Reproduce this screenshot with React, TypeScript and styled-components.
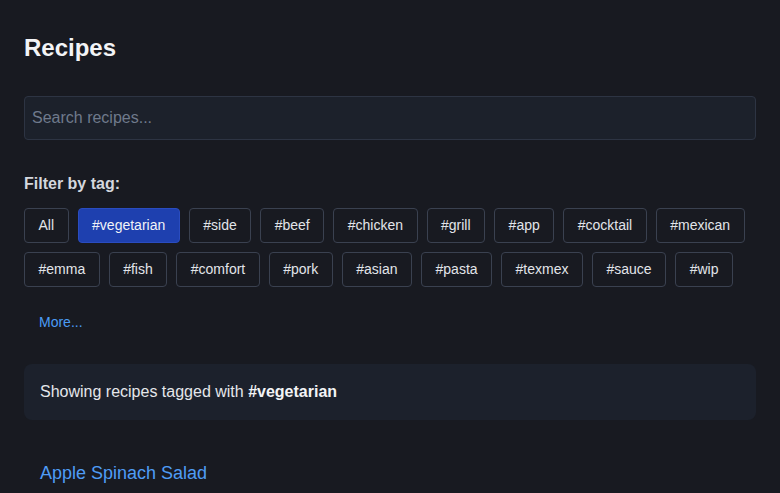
import React, { useState } from "react";
import styled, { createGlobalStyle } from "styled-components";

const GlobalStyle = createGlobalStyle`
  html, body {
    margin: 0;
    padding: 0;
    background: #181a21;
  }
  body {
    font-family: "Liberation Sans", Arial, sans-serif;
    color: #e5e7eb;
  }
  * { box-sizing: border-box; }
`;

const Page = styled.main`
  min-height: 493px;
  padding: 34px 24px 24px 24px;
  background: #181a21;
`;

const Title = styled.h1`
  margin: 0 0 34px 0;
  font-size: 24px;
  line-height: 1.15;
  font-weight: 700;
  color: #f3f4f6;
`;

const Search = styled.input`
  display: block;
  width: 100%;
  height: 44px;
  padding: 0 7px;
  background: #1c212b;
  border: 1px solid #2d3443;
  border-radius: 4px;
  color: #e5e7eb;
  font-family: "Liberation Sans", Arial, sans-serif;
  font-size: 16px;
  outline: none;
  &::placeholder {
    color: #6f7a8c;
  }
`;

const FilterLabel = styled.div`
  margin: 35px 0 15px 0;
  font-size: 16px;
  line-height: 1.15;
  font-weight: 700;
  color: #d4d7de;
`;

const TagList = styled.div`
  display: flex;
  flex-wrap: wrap;
  column-gap: 9px;
  row-gap: 9px;
`;

const TagButton = styled.button<{ $active?: boolean }>`
  height: 35px;
  padding: 1px 13.5px 0 13.5px;
  border: 1px solid ${(p) => (p.$active ? "#2a4cc0" : "#3a4150")};
  border-radius: 4px;
  background: ${(p) => (p.$active ? "#1e40af" : "transparent")};
  color: ${(p) => (p.$active ? "#f1f3f7" : "#e2e5ea")};
  font-family: "Liberation Sans", Arial, sans-serif;
  font-size: 14px;
  line-height: 17px;
  cursor: pointer;
`;

const MoreButton = styled.button`
  display: block;
  margin-top: 18px;
  height: 35px;
  padding: 0 14px;
  border: 1px solid transparent;
  background: transparent;
  color: #4b9cf5;
  font-family: "Liberation Sans", Arial, sans-serif;
  font-size: 14px;
  cursor: pointer;
`;

const InfoCard = styled.div`
  margin-top: 24px;
  padding: 16px;
  background: #1c212c;
  border-radius: 8px;
  font-size: 16px;
  line-height: 24px;
  color: #e5e7eb;
  strong {
    color: #f3f4f6;
    font-weight: 700;
  }
`;

const RecipeList = styled.ul`
  list-style: none;
  margin: 27px 0 0 0;
  padding: 0;
`;

const RecipeItem = styled.li`
  padding: 16px;
`;

const RecipeLink = styled.a`
  font-size: 18px;
  line-height: 1.15;
  color: #4f9cf5;
  text-decoration: none;
`;

const tags = [
  "all",
  "vegetarian",
  "side",
  "beef",
  "chicken",
  "grill",
  "app",
  "cocktail",
  "mexican",
  "emma",
  "fish",
  "comfort",
  "pork",
  "asian",
  "pasta",
  "texmex",
  "sauce",
  "wip",
];

export default function App() {
  const [active, setActive] = useState("vegetarian");
  return (
    <>
      <GlobalStyle />
      <Page>
        <Title>Recipes</Title>
        <Search placeholder="Search recipes..." />
        <FilterLabel>Filter by tag:</FilterLabel>
        <TagList>
          {tags.map((t) => (
            <TagButton key={t} $active={active === t} onClick={() => setActive(t)}>
              {t === "all" ? "All" : `#${t}`}
            </TagButton>
          ))}
        </TagList>
        <MoreButton>More...</MoreButton>
        <InfoCard>
          Showing recipes tagged with <strong>#{active}</strong>
        </InfoCard>
        <RecipeList>
          <RecipeItem>
            <RecipeLink href="#">Apple Spinach Salad</RecipeLink>
          </RecipeItem>
        </RecipeList>
      </Page>
    </>
  );
}
